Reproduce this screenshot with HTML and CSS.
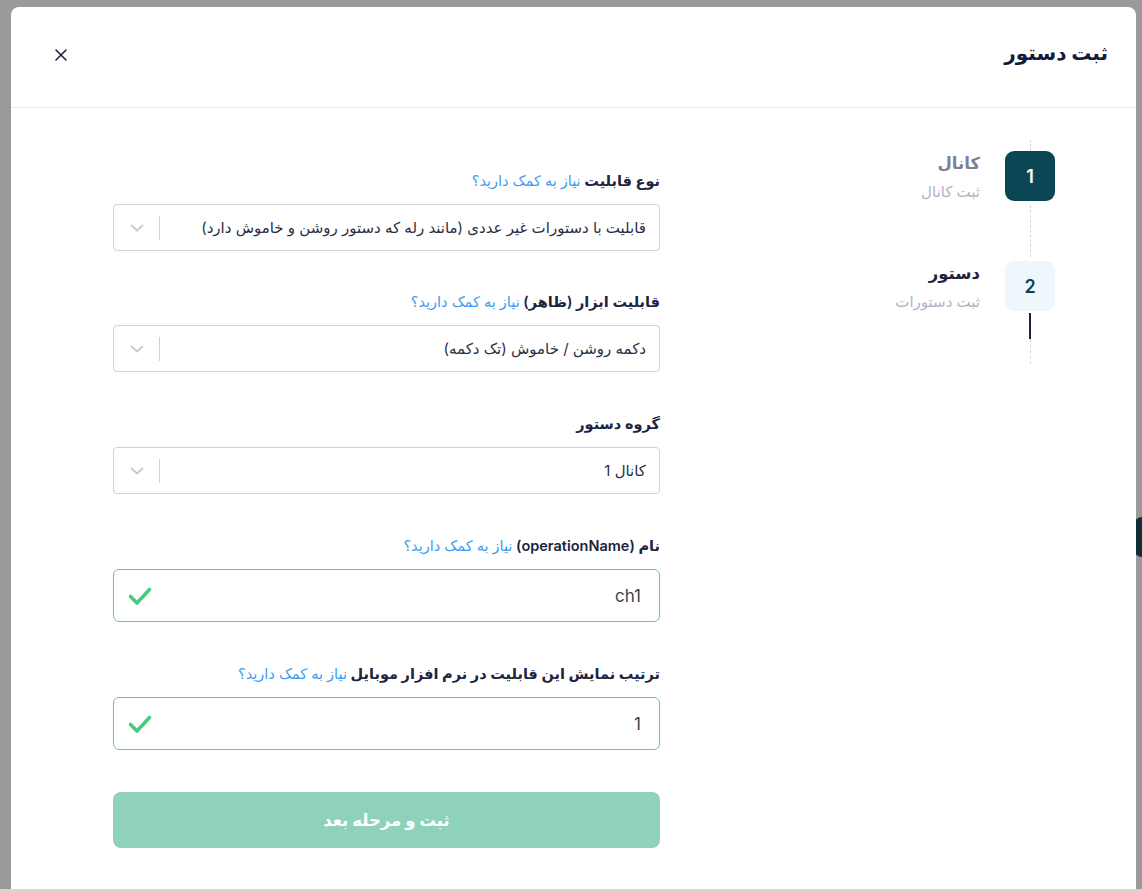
FILE: index.html
```html
<!DOCTYPE html>
<html lang="fa">
<head>
<meta charset="utf-8">
<title>ثبت دستور</title>
<link rel="stylesheet" href="styles.css">
</head>
<body>
<div class="backdrop">
  <div class="bg-chip"></div>
  <div class="modal" dir="rtl">
    <header class="modal-header">
      <h1 class="modal-title">ثبت دستور</h1>
      <button class="close-btn" aria-label="بستن">
        <svg width="14" height="14" viewBox="0 0 14 14"><path d="M2 2 L12 12 M12 2 L2 12" stroke="#1e2440" stroke-width="1.6" stroke-linecap="round" fill="none"/></svg>
      </button>
    </header>
    <div class="modal-body">
      <aside class="stepper">
        <div class="line-top"></div>
        <div class="step">
          <div class="indicator">
            <div class="num num-done">1</div>
            <div class="line-dashed l-mid"></div>
          </div>
          <div class="step-text">
            <div class="step-title done">کانال</div>
            <div class="step-sub">ثبت کانال</div>
          </div>
        </div>
        <div class="step">
          <div class="indicator">
            <div class="num num-active">2</div>
            <div class="line-solid"></div>
            <div class="line-dashed l-end"></div>
          </div>
          <div class="step-text">
            <div class="step-title">دستور</div>
            <div class="step-sub">ثبت دستورات</div>
          </div>
        </div>
      </aside>

      <form class="form">
        <div class="field f1">
          <label class="label">نوع قابلیت <a class="help">نیاز به کمک دارید؟</a></label>
          <div class="select">
            <span class="select-value">قابلیت با دستورات غیر عددی (مانند رله که دستور روشن و خاموش دارد)</span>
            <span class="select-sep"></span>
            <span class="select-arrow"><svg width="14" height="8" viewBox="0 0 14 8"><path d="M1.5 1.5 L7 6.5 L12.5 1.5" stroke="#c8c8c8" stroke-width="1.8" fill="none" stroke-linecap="round" stroke-linejoin="round"/></svg></span>
          </div>
        </div>
        <div class="field">
          <label class="label">قابلیت ابزار (ظاهر) <a class="help">نیاز به کمک دارید؟</a></label>
          <div class="select">
            <span class="select-value">دکمه روشن / خاموش (تک دکمه)</span>
            <span class="select-sep"></span>
            <span class="select-arrow"><svg width="14" height="8" viewBox="0 0 14 8"><path d="M1.5 1.5 L7 6.5 L12.5 1.5" stroke="#c8c8c8" stroke-width="1.8" fill="none" stroke-linecap="round" stroke-linejoin="round"/></svg></span>
          </div>
        </div>
        <div class="field">
          <label class="label">گروه دستور</label>
          <div class="select">
            <span class="select-value">کانال 1</span>
            <span class="select-sep"></span>
            <span class="select-arrow"><svg width="14" height="8" viewBox="0 0 14 8"><path d="M1.5 1.5 L7 6.5 L12.5 1.5" stroke="#c8c8c8" stroke-width="1.8" fill="none" stroke-linecap="round" stroke-linejoin="round"/></svg></span>
          </div>
        </div>
        <div class="field">
          <label class="label">نام (operationName) <a class="help">نیاز به کمک دارید؟</a></label>
          <div class="input valid">
            <span class="input-value">ch1</span>
            <svg class="check" width="26" height="22" viewBox="0 0 26 22"><path d="M3.5 11.5 L10 18 L22.5 4.5" stroke="#4cc980" stroke-width="3.6" fill="none" stroke-linecap="round" stroke-linejoin="round"/></svg>
          </div>
        </div>
        <div class="field f5">
          <label class="label">ترتیب نمایش این قابلیت در نرم افزار موبایل <a class="help">نیاز به کمک دارید؟</a></label>
          <div class="input valid">
            <span class="input-value">1</span>
            <svg class="check" width="26" height="22" viewBox="0 0 26 22"><path d="M3.5 11.5 L10 18 L22.5 4.5" stroke="#4cc980" stroke-width="3.6" fill="none" stroke-linecap="round" stroke-linejoin="round"/></svg>
          </div>
        </div>
        <button type="button" class="submit">ثبت و مرحله بعد</button>
      </form>
    </div>
  </div>
</div>
<div class="bottom-line"></div>
</body>
</html>
```

FILE: styles.css
```css
* { box-sizing: border-box; }
html, body { margin: 0; padding: 0; }
body {
  width: 1142px;
  height: 892px;
  overflow: hidden;
  background: #9a9a9a;
  font-family: Inter, "DejaVu Sans", sans-serif;
  color: #1e2440;
}
.backdrop {
  position: relative;
  height: 889px;
  padding: 7px 6px 0 11px;
  background: #9a9a9a;
}
.bg-chip {
  position: absolute;
  right: -10px;
  top: 517px;
  width: 18px;
  height: 40px;
  border-radius: 8px;
  background: #0f2e35;
}
.bottom-line { height: 3px; background: #d4d4d4; }

.modal {
  position: relative;
  width: 1125px;
  height: 882px;
  background: #fff;
  border-radius: 8px 8px 0 0;
  display: flex;
  flex-direction: column;
}
.modal-header {
  height: 101px;
  border-bottom: 1px solid #ebebf0;
  display: flex;
  align-items: center;
  justify-content: space-between;
  padding: 0 28px 8px 43px;
}
.modal-title {
  margin: 0;
  font-size: 20px;
  font-weight: 700;
  color: #141a3a;
}
.close-btn {
  border: 0;
  background: transparent;
  padding: 0;
  width: 14px;
  height: 14px;
  display: flex;
  align-items: center;
  justify-content: center;
  margin-top: 4px;
}

.modal-body {
  display: flex;
  justify-content: space-between;
  padding: 0 81px 0 102px;
}

/* stepper */
.stepper {
  padding-top: 32px;
  display: flex;
  flex-direction: column;
}
.line-top {
  width: 50px;
  height: 11px;
  display: flex;
  justify-content: center;
}
.line-top::before {
  content: "";
  border-left: 1px dashed #d6d7de;
  height: 100%;
}
.step { display: flex; gap: 25px; }
.indicator {
  width: 50px;
  display: flex;
  flex-direction: column;
  align-items: center;
}
.num {
  width: 50px;
  height: 50px;
  border-radius: 9px;
  display: flex;
  align-items: center;
  justify-content: center;
  font-family: Inter, sans-serif;
  font-size: 18px;
  font-weight: 600;
}
.num-done { background: #0b4654; color: #fff; }
.num-active { background: #eef7fc; color: #0b4654; }
.line-dashed { border-left: 1px dashed #d6d7de; }
.l-mid { height: 52px; margin: 4px 0; }
.line-solid { height: 26px; margin-top: 2px; border-left: 2px solid #1e2440; }
.l-end { height: 25px; }
.step-text { padding-top: 1px; }
.step-title {
  font-size: 16.5px;
  font-weight: 700;
  line-height: 22px;
  color: #1e2440;
}
.step-title.done { color: #7b8298; }
.step-sub {
  margin-top: 8px;
  font-size: 15px;
  line-height: 20px;
  color: #b1b4c3;
}

/* form */
.form {
  width: 547px;
  padding-top: 61px;
  display: flex;
  flex-direction: column;
}
.field { margin-bottom: 40px; }
.field.f1 { margin-bottom: 39px; }
.field.f5 { margin-bottom: 39px; }
.label {
  display: block;
  height: 24px;
  line-height: 24px;
  font-size: 14.5px;
  font-weight: 600;
  color: #1e2440;
  margin-bottom: 11px;
}
.help {
  font-weight: 400;
  color: #3d9cf2;
  cursor: pointer;
}
.select {
  height: 47px;
  border: 1px solid #d2d2d2;
  border-radius: 4px;
  display: flex;
  align-items: center;
  padding-right: 13px;
}
.select-value {
  flex: 1;
  font-size: 15px;
  color: #2b2f3f;
}
.select-sep {
  width: 1px;
  height: 24px;
  background: #d2d2d2;
}
.select-arrow {
  width: 45px;
  display: flex;
  align-items: center;
  justify-content: center;
  padding-top: 1px;
}
.input {
  height: 53px;
  border: 1px solid #5ccf8e;
  border-radius: 6px;
  display: flex;
  align-items: center;
  justify-content: space-between;
  padding: 0 18px 0 13px;
}
.input-value {
  font-family: Inter, sans-serif;
  font-size: 17px;
  color: #3b3f55;
}
.check { display: block; }

.submit {
  margin-top: 3px;
  height: 56px;
  border: 0;
  border-radius: 8px;
  background: #8fd2bc;
  color: #fff;
  font-family: Inter, "DejaVu Sans", sans-serif;
  font-size: 16.5px;
  font-weight: 700;
}
```
